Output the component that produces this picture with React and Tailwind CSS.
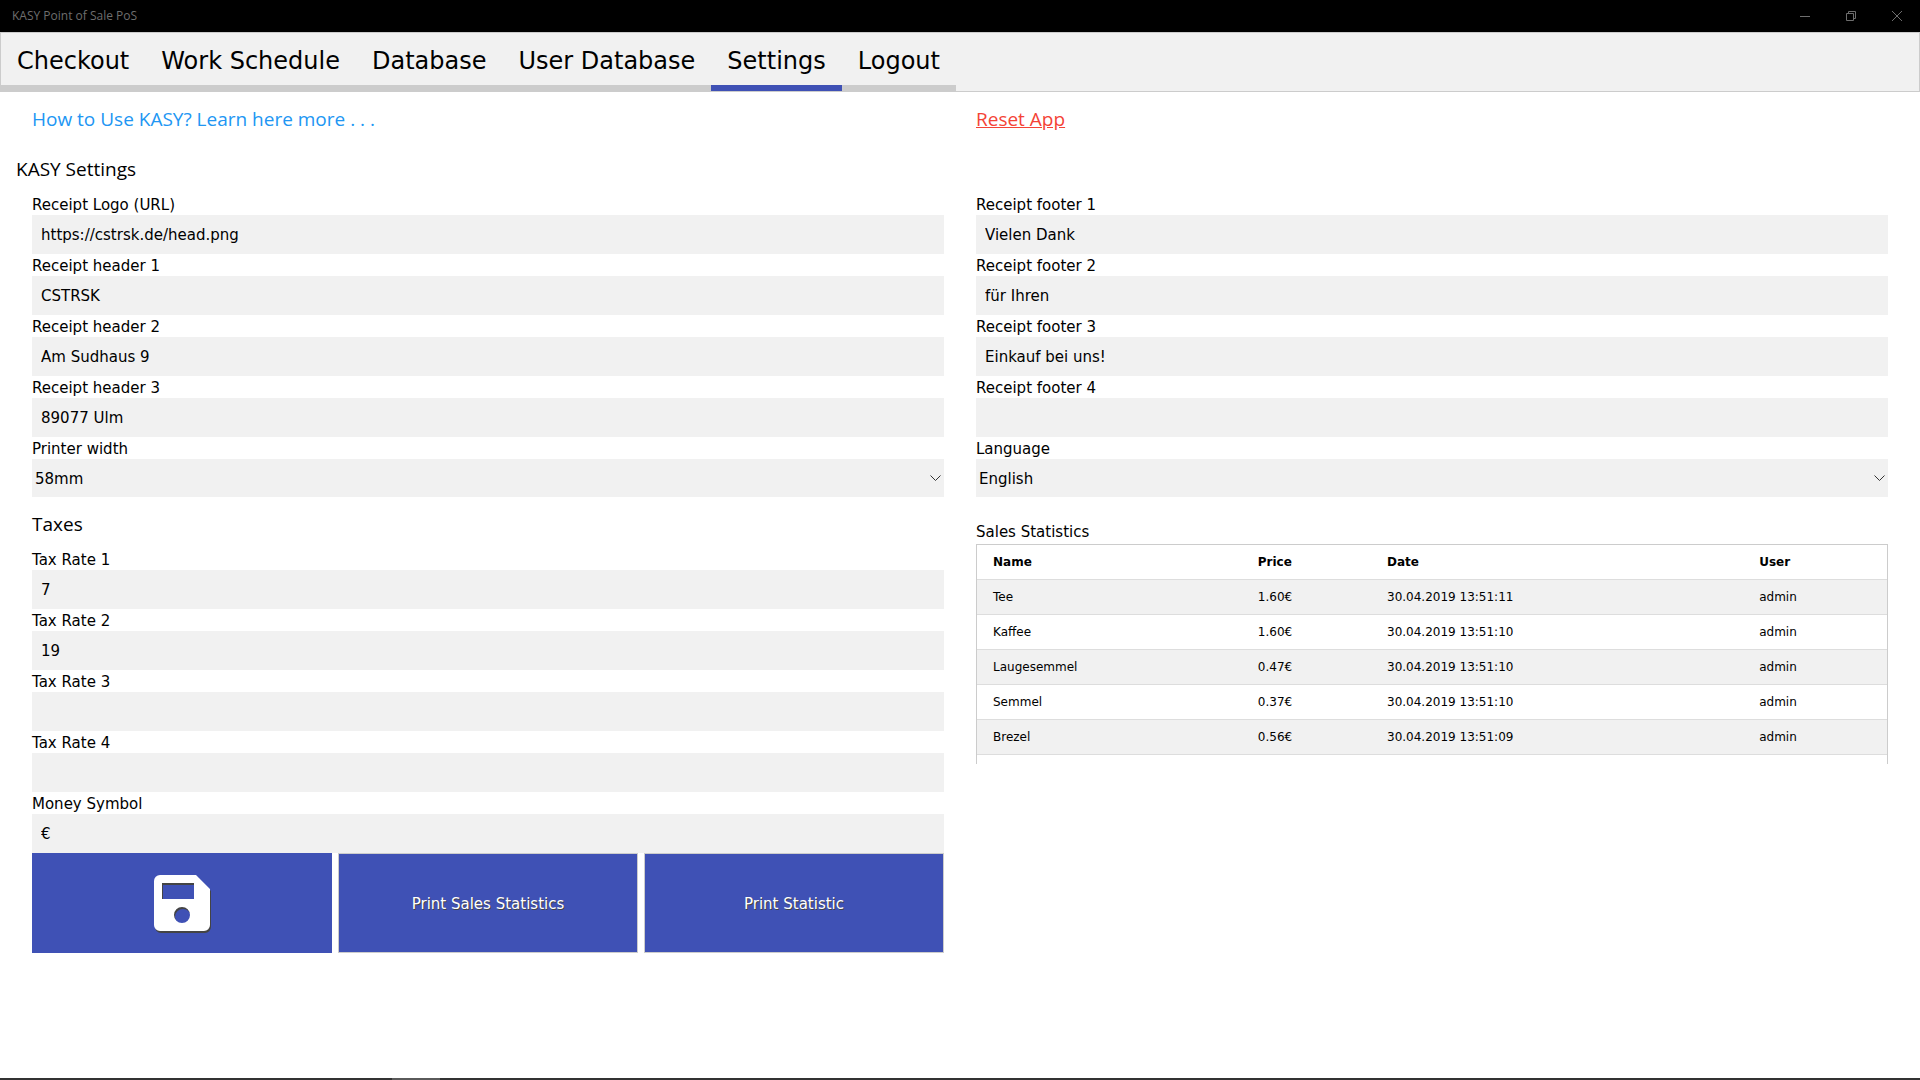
import { useState } from "react";

const verdana = "font-[Verdana,'DejaVu_Sans',sans-serif]";
const segoe = "font-['Segoe_UI','Open_Sans',sans-serif]";

const tabs = ["Checkout", "Work Schedule", "Database", "User Database", "Settings", "Logout"];

const receiptHeaders = [
  { id: "logo", label: "Receipt Logo (URL)", value: "https://cstrsk.de/head.png" },
  { id: "header1", label: "Receipt header 1", value: "CSTRSK" },
  { id: "header2", label: "Receipt header 2", value: "Am Sudhaus 9" },
  { id: "header3", label: "Receipt header 3", value: "89077 Ulm" },
];

const receiptFooters = [
  { id: "footer1", label: "Receipt footer 1", value: "Vielen Dank" },
  { id: "footer2", label: "Receipt footer 2", value: "für Ihren" },
  { id: "footer3", label: "Receipt footer 3", value: "Einkauf bei uns!" },
  { id: "footer4", label: "Receipt footer 4", value: "" },
];

const taxFields = [
  { id: "tax1", label: "Tax Rate 1", value: "7" },
  { id: "tax2", label: "Tax Rate 2", value: "19" },
  { id: "tax3", label: "Tax Rate 3", value: "" },
  { id: "tax4", label: "Tax Rate 4", value: "" },
  { id: "symbol", label: "Money Symbol", value: "€" },
];

const sales = [
  { name: "Tee", price: "1.60€", date: "30.04.2019 13:51:11", user: "admin" },
  { name: "Kaffee", price: "1.60€", date: "30.04.2019 13:51:10", user: "admin" },
  { name: "Laugesemmel", price: "0.47€", date: "30.04.2019 13:51:10", user: "admin" },
  { name: "Semmel", price: "0.37€", date: "30.04.2019 13:51:10", user: "admin" },
  { name: "Brezel", price: "0.56€", date: "30.04.2019 13:51:09", user: "admin" },
];

function TitleBar() {
  return (
    <header className="flex h-8 items-center justify-between bg-black pl-3 text-[#6e6e6e]">
      <span className={`text-xs ${segoe}`}>KASY Point of Sale PoS</span>
      <div className="flex h-full">
        <button type="button" aria-label="Minimize" className="flex w-[46px] items-center justify-center">
          <svg width="10" height="10" viewBox="0 0 10 10" stroke="currentColor" fill="none">
            <path d="M0 5.5h10" />
          </svg>
        </button>
        <button type="button" aria-label="Restore" className="flex w-[46px] items-center justify-center">
          <svg width="10" height="10" viewBox="0 0 10 10" stroke="currentColor" fill="none">
            <path d="M.5 2.5h7v7h-7zM2.5 2.5v-2h7v7h-2" />
          </svg>
        </button>
        <button type="button" aria-label="Close" className="flex w-[46px] items-center justify-center">
          <svg width="10" height="10" viewBox="0 0 10 10" stroke="currentColor" fill="none">
            <path d="M0 0l10 10M10 0L0 10" />
          </svg>
        </button>
      </div>
    </header>
  );
}

function TextField({ id, label, value }) {
  return (
    <div>
      <label htmlFor={id} className="block h-[22px] leading-6">
        {label}
      </label>
      <input
        id={id}
        type="text"
        defaultValue={value}
        className="block h-[39px] w-full bg-[#f1f1f1] px-[9px] outline-none"
      />
    </div>
  );
}

function SelectField({ id, label, options }) {
  return (
    <div>
      <label htmlFor={id} className="block h-[22px] leading-6">
        {label}
      </label>
      <div className="relative">
        <select id={id} className="block h-[38px] w-full appearance-none bg-[#f1f1f1] pt-0.5 pl-[3px] outline-none">
          {options.map((option) => (
            <option key={option}>{option}</option>
          ))}
        </select>
        <svg
          className="pointer-events-none absolute top-4 right-[3px] text-[#333]"
          width="11"
          height="7"
          viewBox="0 0 11 7"
          stroke="currentColor"
          fill="none"
        >
          <path d="M.5 .5l5 5 5-5" />
        </svg>
      </div>
    </div>
  );
}

function SaveIcon() {
  return (
    <svg className="drop-shadow-[1px_2px_0_#444]" width="56" height="56" viewBox="0 0 56 56" fill="#fff">
      <path
        fillRule="evenodd"
        d="M6 0h36l14 14v36a6 6 0 0 1-6 6H6a6 6 0 0 1-6-6V6a6 6 0 0 1 6-6zM8 8v16h32V8zM28 32a8 8 0 1 0 0 16 8 8 0 0 0 0-16z"
      />
    </svg>
  );
}

function SalesTable() {
  return (
    <div className="border border-b-0 border-[#ccc] pb-[9px]">
      <table className="w-full table-fixed text-left text-xs leading-[18px]" aria-labelledby="sales-title">
        <colgroup>
          <col className="w-[29.1%]" />
          <col className="w-[14.2%]" />
          <col className="w-[40.9%]" />
          <col className="w-[15.8%]" />
        </colgroup>
        <thead>
          <tr className="border-b border-[#ddd]">
            {["Name", "Price", "Date", "User"].map((title) => (
              <th key={title} className="py-2 pl-4 font-bold">
                {title}
              </th>
            ))}
          </tr>
        </thead>
        <tbody>
          {sales.map((sale) => (
            <tr key={sale.name} className="border-b border-[#ddd] odd:bg-[#f1f1f1]">
              <td className="py-2 pl-4">{sale.name}</td>
              <td className="py-2 pl-4">{sale.price}</td>
              <td className="py-2 pl-4">{sale.date}</td>
              <td className="py-2 pl-4">{sale.user}</td>
            </tr>
          ))}
        </tbody>
      </table>
    </div>
  );
}

export default function App() {
  const [activeTab, setActiveTab] = useState("Settings");

  return (
    <div className={`flex min-h-screen flex-col bg-white text-[15px] text-black ${verdana}`}>
      <TitleBar />

      <nav className="flex border border-[#ccc] bg-[#f1f1f1]">
        {tabs.map((tab) => (
          <button
            key={tab}
            type="button"
            onClick={() => setActiveTab(tab)}
            className={`h-[58px] border-b-6 px-4 pt-1 text-2xl whitespace-nowrap ${
              tab === activeTab ? "border-[#3f51b5]" : "border-[#ccc]"
            }`}
          >
            {tab}
          </button>
        ))}
      </nav>

      <main className="flex-1 px-4 pt-3">
        <div className={`grid grid-cols-2 text-[19px] leading-[30px] ${segoe}`}>
          <div className="px-4">
            <a href="#help" className="text-[#2196f3]">
              How to Use KASY? Learn here more . . .
            </a>
          </div>
          <div className="px-4">
            <a href="#reset" className="text-[#f44336] underline">
              Reset App
            </a>
          </div>
        </div>

        <h2 className={`mt-5 mb-[9px] text-[19px] leading-[30px] ${segoe}`}>KASY Settings</h2>

        <div className="grid grid-cols-2">
          <section className="px-4">
            {receiptHeaders.map((field) => (
              <TextField key={field.id} {...field} />
            ))}
            <SelectField id="printer" label="Printer width" options={["58mm", "80mm"]} />

            <h3 className={`mt-3 mb-[9px] text-[19px] leading-[30px] ${segoe}`}>Taxes</h3>
            {taxFields.map((field) => (
              <TextField key={field.id} {...field} />
            ))}

            <div className="grid grid-cols-3 gap-[6px] text-white">
              <button type="button" aria-label="Save" className="flex h-[100px] items-center justify-center bg-[#3f51b5]">
                <SaveIcon />
              </button>
              <button
                type="button"
                className="h-[100px] border border-[#ccc] bg-[#3f51b5] pt-0.5 [text-shadow:1px_1px_0_#444]"
              >
                Print Sales Statistics
              </button>
              <button
                type="button"
                className="h-[100px] border border-[#ccc] bg-[#3f51b5] pt-0.5 [text-shadow:1px_1px_0_#444]"
              >
                Print Statistic
              </button>
            </div>
          </section>

          <section className="px-4">
            {receiptFooters.map((field) => (
              <TextField key={field.id} {...field} />
            ))}
            <SelectField id="language" label="Language" options={["English", "Deutsch"]} />

            <h3 id="sales-title" className="mt-6 mb-px leading-[22px]">
              Sales Statistics
            </h3>
            <SalesTable />
          </section>
        </div>
      </main>

      {/* top edge of the taskbar with the running app */}
      <footer className="h-0.5 bg-[#333] pl-[392px]">
        <div className="h-full w-12 bg-[#5a5a5a]" />
      </footer>
    </div>
  );
}
